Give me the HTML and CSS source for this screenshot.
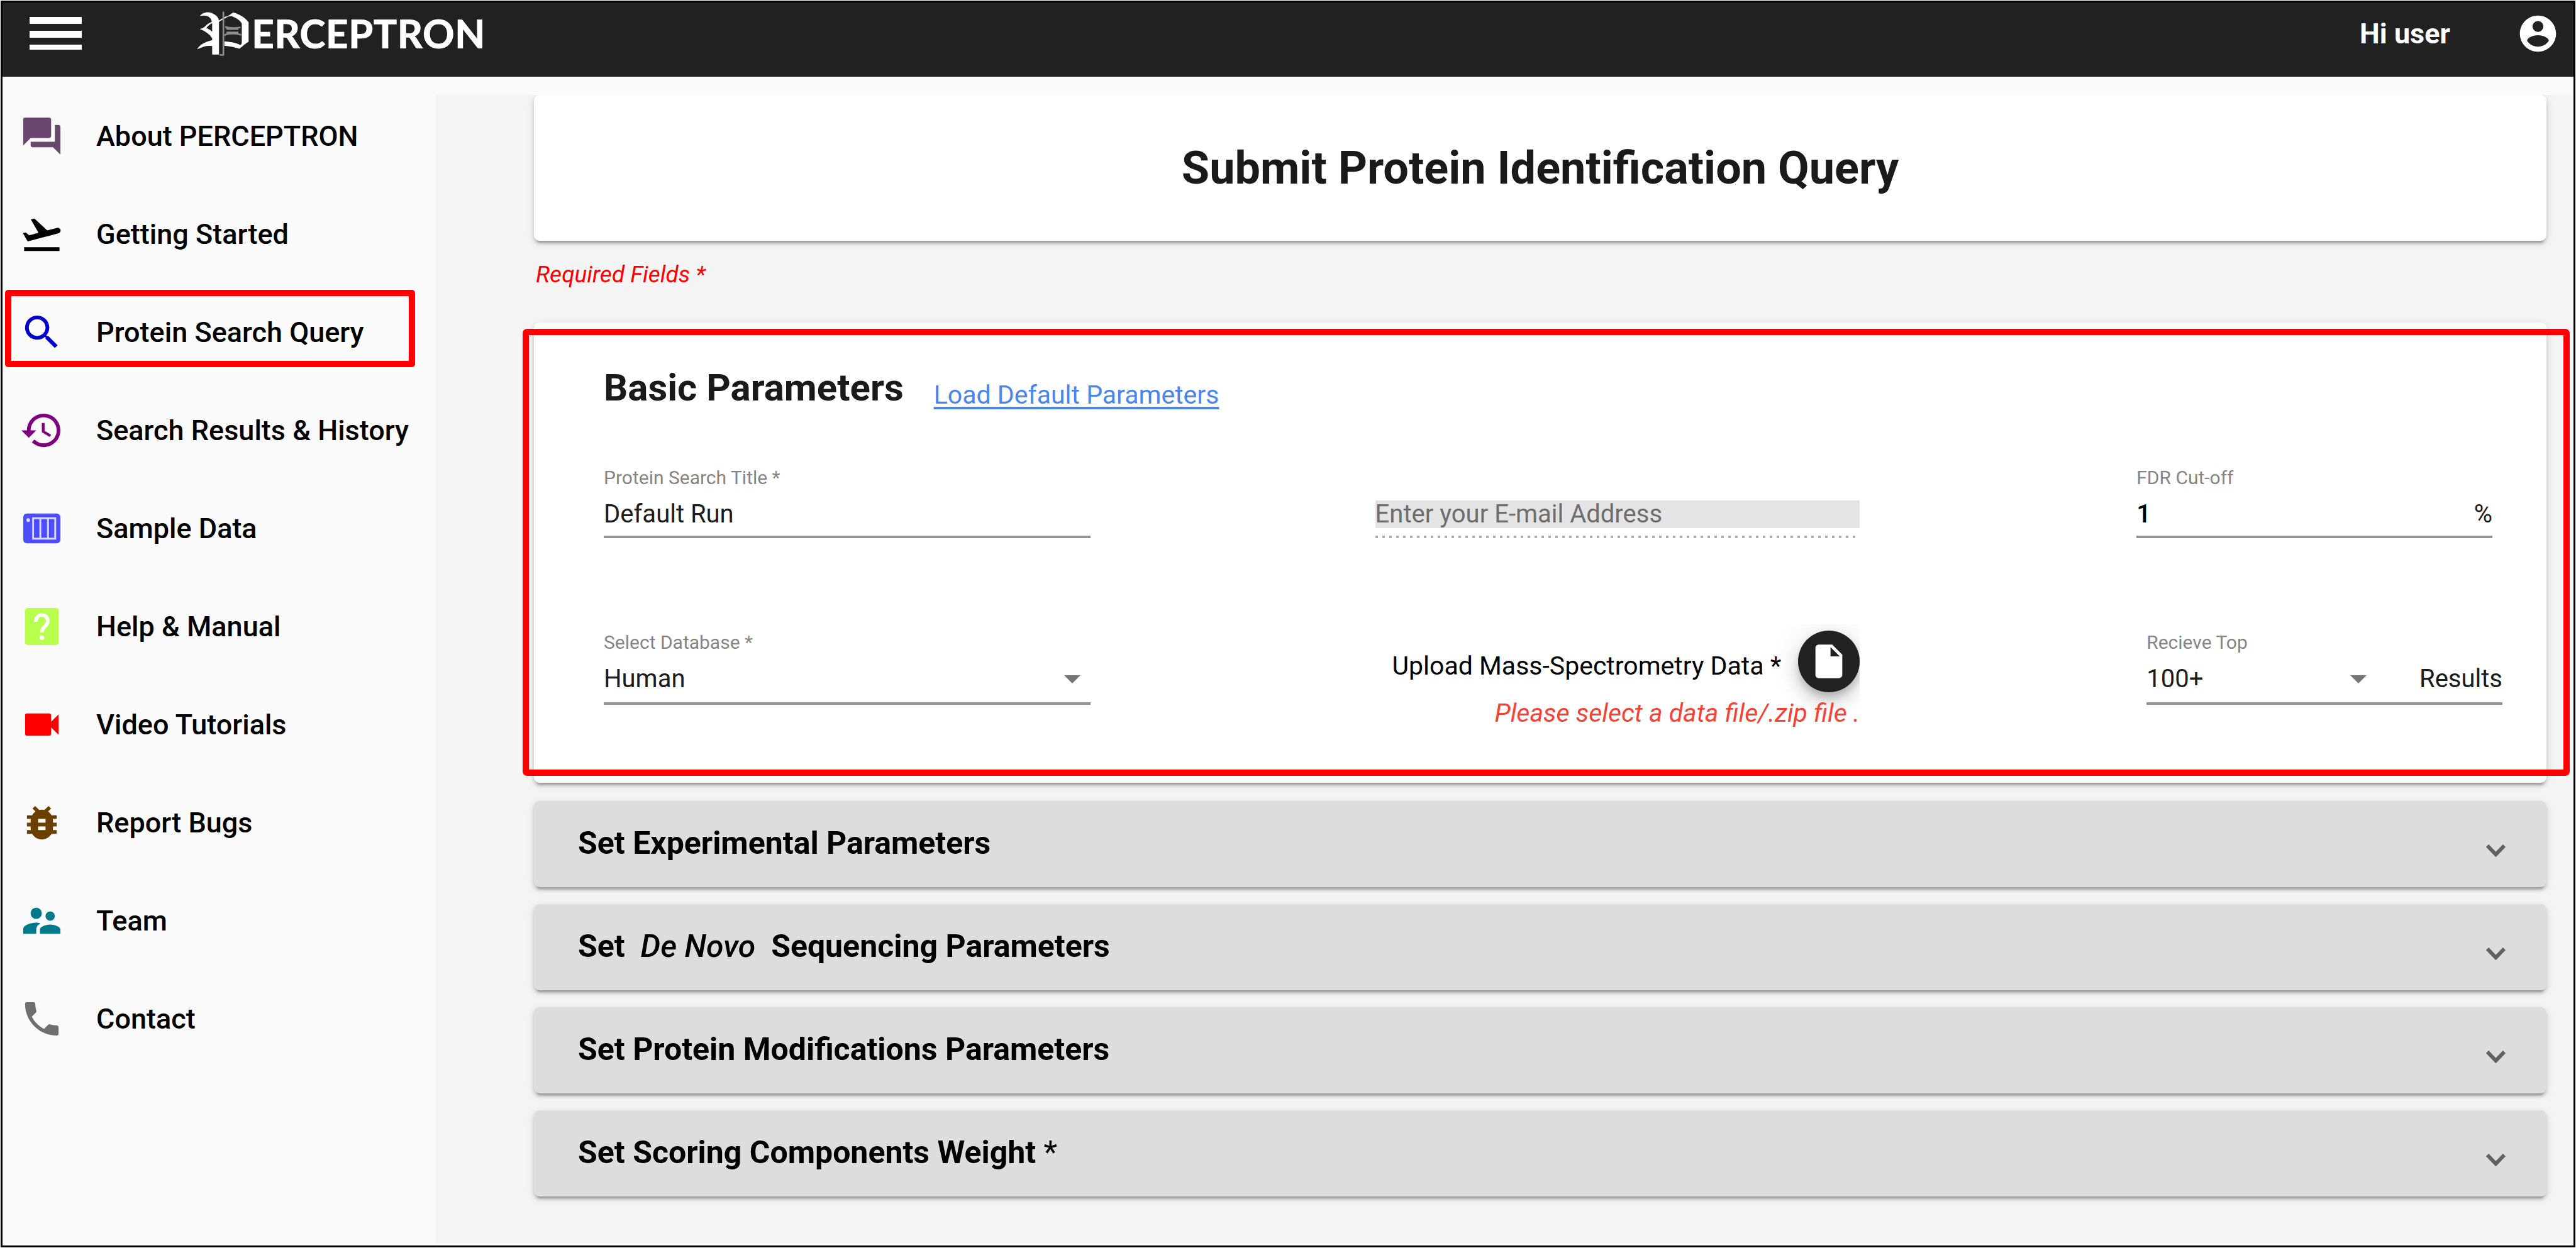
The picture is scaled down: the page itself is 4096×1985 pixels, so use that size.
FILE: index.html
```html
<!DOCTYPE html>
<html lang="en">
<head>
<meta charset="utf-8">
<meta name="viewport" content="width=device-width, initial-scale=1">
<title>Perceptron – Submit Protein Identification Query</title>
<link rel="stylesheet" href="styles.css">
</head>
<body>
<div class="app">
  <header class="topbar">
    <button class="icon-button" type="button" aria-label="Toggle menu">
      <svg class="burger" viewBox="0 0 83 52" aria-hidden="true"><path d="M0 0h83v11H0zM0 22h83v11H0zM0 44h83v8H0z"/></svg>
    </button>
    <a class="brand" href="#" aria-label="Perceptron home">
      <svg class="brand-mark" viewBox="28 40 307 262" aria-hidden="true">
        <path fill="#fff" d="M48 68C62 48 92 40 118 50c20 8 38 22 42 44v200h-40v-50c-30-4-52 2-70 12l-18 6c14-24 46-44 88-52v-12c-14-22-36-40-72-54 20-4 30-14 44-28 10-8 18-10 26-14-2-24-24-44-70-34zM86 138c14 6 26 14 34 22v-50c-10 4-24 14-34 28z"/>
        <path fill="#fff" d="M196 74c14-4 26-12 48-28 34 12 66 26 90 58v114c-20 12-34 26-54 42-28-8-56-16-88-18v-26c34 2 66 8 96 22l6-12V112c-14-24-42-38-62-44-12 0-24 6-36 12z"/>
        <path fill="none" stroke="#fff" stroke-width="7" d="M156 100l48-28"/>
        <path fill="none" stroke="#8c8c8c" stroke-width="10" d="M186 42v252M164 296h26M196 132c30 8 60 8 90 2M192 182c14-16 80-14 98-2M204 144h70M204 164h70"/>
      </svg>
      <span class="brand-name">ERCEPTRON</span>
    </a>
    <div class="account">
      <span class="account-name">Hi user</span>
      <button class="icon-button" type="button" aria-label="Account">
        <svg class="account-icon" viewBox="0 0 24 24" aria-hidden="true"><path d="M12 2C6.480 2 2 6.480 2 12s4.480 10 10 10 10-4.480 10-10S17.520 2 12 2zm0 3c1.660 0 3 1.340 3 3s-1.340 3-3 3-3-1.340-3-3 1.340-3 3-3zm0 14.200c-2.500 0-4.710-1.280-6-3.220.030-1.990 4-3.080 6-3.080 1.990 0 5.970 1.090 6 3.080-1.290 1.940-3.500 3.220-6 3.220z"/></svg>
      </button>
    </div>
  </header>

  <div class="layout">
    <nav class="sidebar" aria-label="Main">
      <a class="nav-item" href="#"><svg class="nav-icon" fill="#69476f" viewBox="0 0 24 24" aria-hidden="true"><path d="M21 6h-2v9H6v2c0 .55.45 1 1 1h11l4 4V7c0-.55-.45-1-1-1zm-4 6V3c0-.55-.45-1-1-1H3c-.55 0-1 .45-1 1v14l4-4h10c.55 0 1-.45 1-1z"/></svg>About PERCEPTRON</a>
      <a class="nav-item" href="#"><svg class="nav-icon" fill="#000" viewBox="0 0 24 24" aria-hidden="true"><path d="M2.500 19h19v2h-19zm19.570-9.360c-.21-.8-1.040-1.280-1.840-1.060L14.920 10l-6.900-6.430-1.930.51 4.140 7.170-4.970 1.330-1.970-1.540-1.450.39 1.820 3.160.77 1.330 1.600-.43 5.310-1.420 4.350-1.160L21 11.490c.81-.23 1.280-1.050 1.070-1.850z"/></svg>Getting Started</a>
      <a class="nav-item nav-item--marked" href="#" aria-current="page"><svg class="nav-icon" fill="#0000cd" viewBox="0 0 24 24" aria-hidden="true"><path d="M15.500 14h-.79l-.28-.27C15.410 12.590 16 11.110 16 9.500 16 5.910 13.090 3 9.500 3S3 5.910 3 9.500 5.910 16 9.500 16c1.610 0 3.090-.59 4.230-1.570l.27.28v.79l5 4.990L20.490 19l-4.990-5zm-6 0C7.010 14 5 11.990 5 9.500S7.010 5 9.500 5 14 7.010 14 9.500 11.990 14 9.500 14z"/></svg>Protein Search Query</a>
      <a class="nav-item" href="#"><svg class="nav-icon" fill="#800080" viewBox="0 0 24 24" aria-hidden="true"><path d="M13 3c-4.970 0-9 4.030-9 9H1l3.890 3.890.07.14L9 12H6c0-3.870 3.130-7 7-7s7 3.130 7 7-3.130 7-7 7c-1.930 0-3.680-.79-4.940-2.060l-1.420 1.420C8.270 19.990 10.510 21 13 21c4.970 0 9-4.030 9-9s-4.030-9-9-9zm-1 5v5l4.280 2.540.72-1.210-3.500-2.080V8H12z"/></svg>Search Results &amp; History</a>
      <a class="nav-item" href="#"><svg class="nav-icon" viewBox="0 0 24 24" aria-hidden="true"><rect x="2" y="4" width="20" height="16" rx="2" fill="#4d4dff"/><circle cx="4.700" cy="7.500" r="1" fill="#dcdcff"/><path fill="none" stroke="#dcdcff" stroke-width="1" d="M7.300 6.500h11.900v11H7.300zM11.200 6.500v11M15.300 6.500v11"/></svg>Sample Data</a>
      <a class="nav-item" href="#"><svg class="nav-icon" viewBox="0 0 24 24" aria-hidden="true"><rect x="3" y="2" width="18" height="20" rx="1.500" fill="#b8ff4d"/><path fill="none" stroke="#fff" stroke-width="2" d="M8.800 9.500C8.800 4.500 15.200 4.800 15.200 9c0 2.800-3.200 3-3.200 6.200"/><circle cx="12" cy="18" r="1.300" fill="#fff"/></svg>Help &amp; Manual</a>
      <a class="nav-item" href="#"><svg class="nav-icon" fill="#f00" viewBox="0 0 24 24" aria-hidden="true"><path d="M17 10.500V7c0-.55-.45-1-1-1H4c-.55 0-1 .45-1 1v10c0 .55.45 1 1 1h12c.55 0 1-.45 1-1v-3.500l4 4v-11l-4 4z"/></svg>Video Tutorials</a>
      <a class="nav-item" href="#"><svg class="nav-icon" fill="#6b3f00" viewBox="0 0 24 24" aria-hidden="true"><path d="M20 8h-2.810c-.45-.78-1.070-1.450-1.820-1.960L17 4.410 15.590 3l-2.170 2.170C12.960 5.060 12.490 5 12 5c-.49 0-.96.06-1.410.17L8.410 3 7 4.410l1.620 1.630C7.880 6.550 7.260 7.220 6.810 8H4v2h2.090c-.05.33-.09.66-.09 1v1H4v2h2v1c0 .34.04.67.09 1H4v2h2.810c1.040 1.790 2.970 3 5.190 3s4.150-1.210 5.190-3H20v-2h-2.090c.05-.33.09-.66.09-1v-1h2v-2h-2v-1c0-.34-.04-.67-.09-1H20V8zm-6 8h-4v-2h4v2zm0-4h-4v-2h4v2z"/></svg>Report Bugs</a>
      <a class="nav-item" href="#"><svg class="nav-icon" fill="#007a8a" viewBox="0 0 24 24" aria-hidden="true"><path d="M16.500 12c1.380 0 2.490-1.120 2.490-2.500S17.880 7 16.500 7C15.120 7 14 8.120 14 9.500s1.120 2.500 2.500 2.500zM9 11c1.660 0 2.990-1.340 2.990-3S10.660 5 9 5C7.340 5 6 6.340 6 8s1.340 3 3 3zm7.500 3c-1.830 0-5.500.92-5.500 2.750V19h11v-2.250c0-1.830-3.670-2.750-5.500-2.750zM9 13c-2.330 0-7 1.170-7 3.500V19h7v-2.250c0-.85.33-2.340 2.370-3.470C10.500 13.100 9.660 13 9 13z"/></svg>Team</a>
      <a class="nav-item" href="#"><svg class="nav-icon" fill="#6f6f6f" viewBox="0 0 24 24" aria-hidden="true"><path d="M6.620 10.790c1.440 2.830 3.760 5.140 6.590 6.590l2.200-2.200c.27-.27.67-.36 1.020-.24 1.120.37 2.330.57 3.570.57.55 0 1 .45 1 1V20c0 .55-.45 1-1 1-9.390 0-17-7.610-17-17 0-.55.45-1 1-1h3.500c.55 0 1 .45 1 1 0 1.250.2 2.450.57 3.570.11.35.03.74-.25 1.020l-2.200 2.200z"/></svg>Contact</a>
    </nav>

    <main class="content">
      <div class="card title-card">
        <h1 class="page-title">Submit Protein Identification Query</h1>
      </div>
      <p class="required-note">Required Fields *</p>

      <form class="query-form">
        <section class="card basic">
          <div class="basic-head">
            <h2 class="section-title">Basic Parameters</h2>
            <a class="load-link" href="#">Load Default Parameters</a>
          </div>
          <div class="fields">
            <div class="field">
              <label class="field-label" for="run-title">Protein Search Title *</label>
              <div class="field-line"><input class="field-input" id="run-title" type="text" value="Default Run"></div>
            </div>
            <div class="field field--second">
              <div class="field-line field-line--dotted"><input class="field-input" type="email" aria-label="Enter your E-mail Address" placeholder="Enter your E-mail Address" disabled></div>
            </div>
            <div class="field field--third">
              <label class="field-label" for="fdr">FDR Cut-off</label>
              <div class="field-line"><input class="field-input field-input--strong" id="fdr" type="text" inputmode="numeric" value="1"><span>%</span></div>
            </div>

            <div class="field">
              <label class="field-label" for="database">Select Database *</label>
              <div class="field-line field-line--select">
                <select class="field-input" id="database"><option>Human</option></select>
                <svg class="caret" viewBox="0 0 26 13" aria-hidden="true"><path d="M0 0h26L13 13z"/></svg>
              </div>
            </div>
            <div class="upload field--second">
              <div class="upload-row">
                <label class="upload-label" for="upload">Upload Mass-Spectrometry Data *</label>
                <button class="upload-button" id="upload" type="button">
                  <svg class="upload-icon" viewBox="0 0 24 24" aria-hidden="true"><path d="M6 2c-1.100 0-1.990.9-1.990 2L4 20c0 1.100.89 2 1.990 2H18c1.100 0 2-.9 2-2V8l-6-6H6zm7 7V3.500L18.500 9H13z"/></svg>
                </button>
              </div>
              <p class="upload-hint">Please select a data file/.zip file .</p>
            </div>
            <div class="field field--third field--shifted">
              <label class="field-label" for="top">Recieve Top</label>
              <div class="field-line field-line--select">
                <select class="field-input" id="top"><option>100+</option></select>
                <svg class="caret caret--inner" viewBox="0 0 26 13" aria-hidden="true"><path d="M0 0h26L13 13z"/></svg>
                <span>Results</span>
              </div>
            </div>
          </div>
        </section>

        <div class="panels">
          <button class="card panel" type="button" aria-expanded="false"><span>Set Experimental Parameters</span><svg class="chevron" viewBox="0 0 31 20" aria-hidden="true"><path d="M2 2l13.500 14L29 2"/></svg></button>
          <button class="card panel" type="button" aria-expanded="false"><span>Set &nbsp;<i class="term">De Novo</i>&nbsp; Sequencing Parameters</span><svg class="chevron" viewBox="0 0 31 20" aria-hidden="true"><path d="M2 2l13.500 14L29 2"/></svg></button>
          <button class="card panel" type="button" aria-expanded="false"><span>Set Protein Modifications Parameters</span><svg class="chevron" viewBox="0 0 31 20" aria-hidden="true"><path d="M2 2l13.500 14L29 2"/></svg></button>
          <button class="card panel" type="button" aria-expanded="false"><span>Set Scoring Components Weight <span class="star">*</span></span><svg class="chevron" viewBox="0 0 31 20" aria-hidden="true"><path d="M2 2l13.500 14L29 2"/></svg></button>
        </div>
      </form>
    </main>
  </div>
</div>
</body>
</html>
```

FILE: styles.css
```css
*, *::before, *::after { box-sizing: border-box; }

body {
  margin: 0;
  padding: 1px;
  background: #fff;
  color: #000;
  font-family: Roboto, "Liberation Sans", sans-serif;
  font-size: 40px;
}

h1, h2, p { margin: 0; }

button, input, select {
  font: inherit;
  color: inherit;
  border: 0;
  padding: 0;
  margin: 0;
  background: none;
}

svg { display: block; flex: none; }

/* Frame */
.app {
  display: flex;
  flex-direction: column;
  min-height: calc(100vh - 2px);
  border: 3px solid #000;
}

/* Top bar */
.topbar {
  display: flex;
  align-items: center;
  height: 118px;
  padding: 0 22px 20px 43px;
  background: #212121;
  color: #fff;
}

.icon-button { cursor: pointer; }
.burger { width: 83px; height: 52px; fill: #fff; }

.brand {
  display: flex;
  align-items: center;
  gap: 4px;
  margin-left: 182px;
  color: #fff;
  text-decoration: none;
}

.brand-mark { width: 84px; height: 71px; }

.brand-name {
  font-family: Lato, "Open Sans", sans-serif;
  font-weight: 900;
  font-size: 63px;
  line-height: 72px;
}

.account {
  display: flex;
  align-items: center;
  gap: 105px;
  margin-left: auto;
}

.account-name { font-size: 45px; font-weight: 700; }
.account-icon { width: 69px; height: 69px; fill: #fff; }

/* Page body */
.layout {
  flex: 1;
  display: flex;
  border: 3px solid #fff;
  border-top-width: 4px;
  background: #fafafa;
}

.sidebar {
  flex: none;
  width: 686px;
  padding-top: 12px;
}

.nav-item {
  position: relative;
  display: flex;
  align-items: center;
  gap: 51px;
  height: 156px;
  padding-left: 24px;
  color: #000;
  font-size: 45px;
  font-weight: 500;
  text-decoration: none;
}

.nav-icon { width: 71px; height: 71px; }

.nav-item--marked::after {
  content: "";
  position: absolute;
  inset: 11px 33px 22px 1px;
  border: 10px solid #f00;
  border-radius: 5px;
}

.content {
  flex: 1;
  min-width: 0;
  margin-top: 25px;
  padding: 0 40px 74px 156px;
  background: #f4f4f4;
  overflow: hidden;
}

.card {
  border-radius: 9px;
  background: #fff;
  box-shadow: 0 8px 3px -5px rgba(0, 0, 0, .2), 0 5px 5px 0 rgba(0, 0, 0, .14), 0 3px 13px 0 rgba(0, 0, 0, .12);
}

.title-card {
  display: flex;
  align-items: center;
  justify-content: center;
  height: 232px;
}

.page-title {
  color: #1a1a1a;
  font-size: 72px;
  font-weight: 700;
}

.required-note {
  margin: 32px 0 54px 3px;
  color: #f00;
  font-size: 37px;
  line-height: 44px;
  font-style: italic;
}

/* Basic parameters */
.basic {
  position: relative;
  padding: 69px 86px 87px 111px;
}

.basic::after {
  content: "";
  position: absolute;
  inset: 10px -37px 11px -18px;
  border: 10px solid #f00;
  border-radius: 7px;
  pointer-events: none;
}

.basic-head {
  display: flex;
  align-items: flex-end;
  gap: 48px;
  margin-bottom: 90px;
}

.section-title {
  color: #1a1a1a;
  font-size: 60px;
  line-height: 70px;
  font-weight: 700;
}

.load-link {
  color: #4a86ea;
  font-size: 41px;
  line-height: 48px;
  text-decoration: underline;
  text-decoration-thickness: 4px;
  text-underline-offset: 5px;
}

.fields {
  display: grid;
  grid-template-columns: 774fr 453fr 771fr 440fr 566fr;
  row-gap: 148px;
  align-items: start;
}

.field { grid-column: 1; }
.field--second { grid-column: 3; }
.field--third { grid-column: 5; }
.field--shifted { margin: 0 -16px 0 16px; }

.field-label {
  display: block;
  margin-bottom: 18px;
  color: #858585;
  font-size: 30px;
  line-height: 36px;
}

.field-line {
  display: flex;
  align-items: center;
  padding-bottom: 12px;
  border-bottom: 4px solid #949494;
  color: #1c1c1c;
  line-height: 44px;
}

.field-line--select { padding-bottom: 15px; }

.field-line--dotted {
  margin-top: 54px;
  border-bottom: 0;
  padding-bottom: 16px;
  background: repeating-linear-gradient(90deg, #b0b0b0 0 4px, transparent 4px 11px) bottom / 100% 4px no-repeat;
}

.field-input {
  flex: 1;
  min-width: 0;
  height: 44px;
  line-height: 44px;
  appearance: none;
  outline: 0;
}

.field-input:disabled { background: #e4e4e4; }
.field-input::placeholder { color: #6e6e6e; opacity: 1; }
.field-input--strong { font-weight: 500; color: #000; }

.caret { width: 26px; height: 13px; margin-right: 16px; fill: #757575; }
.caret--inner { margin-right: 84px; }

.upload {
  margin-top: -11px;
  padding-top: 10px;
  font-size: 41px;
  overflow: hidden;
}

.upload-row {
  display: flex;
  align-items: center;
  justify-content: flex-end;
  gap: 27px;
}

.upload-label { padding-top: 14px; line-height: 48px; }

.upload-button {
  display: grid;
  place-items: center;
  width: 98px;
  height: 98px;
  border-radius: 50%;
  background: #212121;
  box-shadow: 0 8px 13px -3px rgba(0, 0, 0, .2), 0 16px 26px 0 rgba(0, 0, 0, .14), 0 3px 47px 0 rgba(0, 0, 0, .12);
}

.upload-icon { width: 64px; height: 64px; fill: #fff; }

.upload-hint {
  margin-top: 9px;
  color: #f44336;
  line-height: 48px;
  font-style: italic;
  text-align: right;
}

/* Collapsed panels */
.panels {
  display: flex;
  flex-direction: column;
  gap: 27px;
  margin-top: 29px;
}

.panel {
  display: flex;
  align-items: center;
  justify-content: space-between;
  height: 137px;
  padding: 0 65px 3px 70px;
  background: #ddd;
  font-size: 50px;
  font-weight: 700;
  cursor: pointer;
}

.term { font-weight: 500; }
.star { font-weight: 400; }

.chevron {
  width: 31px;
  height: 20px;
  margin-top: 23px;
  fill: none;
  stroke: #616161;
  stroke-width: 6px;
}
```
